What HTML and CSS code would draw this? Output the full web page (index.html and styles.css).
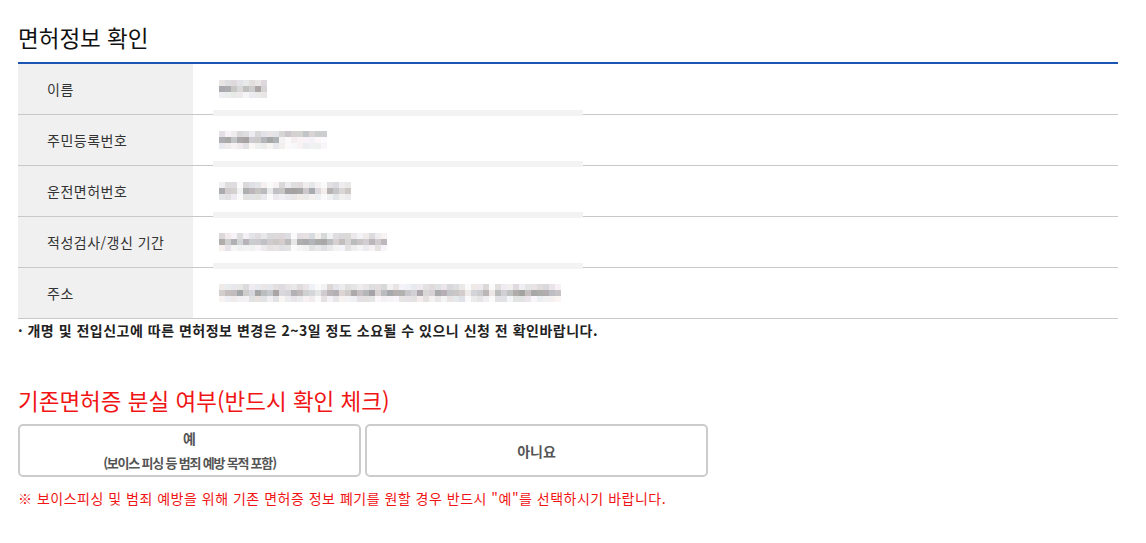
FILE: index.html
```html
<!DOCTYPE html>
<html lang="ko">
<head>
  <meta charset="utf-8">
  <title>면허정보 확인</title>
  <link rel="stylesheet" href="styles.css">
</head>
<body>
  <div class="wrap">
    <h2 class="title">면허정보 확인</h2>

    <div class="info">
      <div class="row">
        <div class="th">이름</div>
        <div class="td"><span class="blur" data-p="xxxxxxxx"></span><span class="mask"></span></div>
      </div>
      <div class="row">
        <div class="th">주민등록번호</div>
        <div class="td"><span class="blur" data-p="xxxxxxxxxxllllllll"></span><span class="mask"></span></div>
      </div>
      <div class="row">
        <div class="th">운전면허번호</div>
        <div class="td"><span class="blur" data-p="xxx.xxxx.xxxxxxxx.xxxx"></span><span class="mask"></span></div>
      </div>
      <div class="row">
        <div class="th">적성검사/갱신 기간</div>
        <div class="td"><span class="blur" data-p="xxxxxxxxxxxx.xxxxxxxxxxxxxxx"></span><span class="mask"></span></div>
      </div>
      <div class="row">
        <div class="th">주소</div>
        <div class="td"><span class="blur" data-p="xxxxxxxxxxxxxxxx.xxxxxxxxxxxxxxxxxxxxxxxx.xxx.xxxxxxxxxxx"></span></div>
      </div>
    </div>
    <p class="note">· 개명 및 전입신고에 따른 면허정보 변경은 2~3일 정도 소요될 수 있으니 신청 전 확인바랍니다.</p>

    <h3 class="sub">기존면허증 분실 여부(반드시 확인 체크)</h3>
    <div class="choice">
      <button class="opt">예<br><span class="small">(보이스 피싱 등 범죄 예방 목적 포함)</span></button>
      <button class="opt">아니요</button>
    </div>
    <p class="warn">※ 보이스피싱 및 범죄 예방을 위해 기존 면허증 정보 폐기를 원할 경우 반드시 "예"를 선택하시기 바랍니다.</p>
  </div>

  <script src="script.js"></script>
</body>
</html>
```

FILE: styles.css
```css
    body {
      font-family: "Noto Sans CJK KR", sans-serif;
      margin: 0;
      background: #fff;
      color: #222;
    }

    .wrap {
      width: 1100px;
      padding-left: 18px;
    }

    .title {
      margin: 19px 0 0;
      padding-bottom: 7px;
      font-size: 22.5px;
      font-weight: normal;
      line-height: 36px;
      color: #111;
      border-bottom: 2px solid #1d56b2;
    }

    .row {
      display: grid;
      grid-template-columns: 175px 1fr;
      height: 50px;
      border-bottom: 1px solid #c8c8c8;
    }

    .th {
      background-color: #f0f0f0;
      padding-left: 29px;
      display: flex;
      align-items: center;
      font-size: 14px;
      letter-spacing: 0.5px;
      color: #333;
    }

    .td {
      position: relative;
      display: flex;
      align-items: center;
      padding-left: 26px;
    }

    .blur {
      display: flex;
      flex-direction: column;
    }

    .blur .line {
      display: flex;
      height: 6px;
    }

    .blur .px {
      width: 6px;
      height: 6px;
    }

    /* light band that sits over the row line */
    .mask {
      position: absolute;
      left: 20px;
      bottom: -2px;
      width: 370px;
      height: 6px;
      background-color: #f3f3f3;
    }

    .note {
      margin: 1px 0 0;
      font-size: 14px;
      font-weight: bold;
      line-height: 20px;
      letter-spacing: 0.5px;
      color: #222;
    }

    .sub {
      margin: 45px 0 0;
      font-size: 22.5px;
      font-weight: normal;
      line-height: 30px;
      color: #f01414;
    }

    .choice {
      display: flex;
      gap: 4px;
      margin-top: 9px;
    }

    .opt {
      width: 343px;
      height: 53px;
      background: #fff;
      border: 2px solid #ccc;
      border-radius: 5px;
      font-family: inherit;
      font-size: 14px;
      font-weight: bold;
      line-height: 24px;
      color: #555;
      padding: 0;
      cursor: pointer;
    }

    .opt .small {
      font-size: 13px;
      letter-spacing: -1.2px;
    }

    .warn {
      margin: 11px 0 0;
      font-size: 14px;
      line-height: 20px;
      letter-spacing: 0.5px;
      color: #f01414;
    }
```

FILE: script.js
```js
// fill the blurred value cells with a grey mosaic
let seed = 7;
function rnd() {
  seed = (seed * 9301 + 49297) % 233280;
  return seed / 233280;
}

function grey(base, spread) {
  const v = Math.round(base + rnd() * spread);
  const r = v + Math.round(rnd() * 10 - 3);
  const b = v + Math.round(rnd() * 8 - 2);
  return 'rgb(' + Math.min(r, 255) + ',' + v + ',' + Math.min(b, 255) + ')';
}

document.querySelectorAll('.blur').forEach(function (el) {
  const p = el.dataset.p;
  const bands = [[215, 28], [162, 55], [224, 22]];
  bands.forEach(function (band, i) {
    const line = document.createElement('div');
    line.className = 'line';
    for (const ch of p) {
      const px = document.createElement('span');
      px.className = 'px';
      if (ch === 'x') {
        px.style.background = grey(band[0], band[1]);
      } else if (ch === 'l') {
        px.style.background = i === 0 ? grey(195, 20) : grey(236, 14);
      } else {
        px.style.background = i === 1 ? grey(228, 16) : '#fafafa';
      }
      line.appendChild(px);
    }
    el.appendChild(line);
  });
});
```
